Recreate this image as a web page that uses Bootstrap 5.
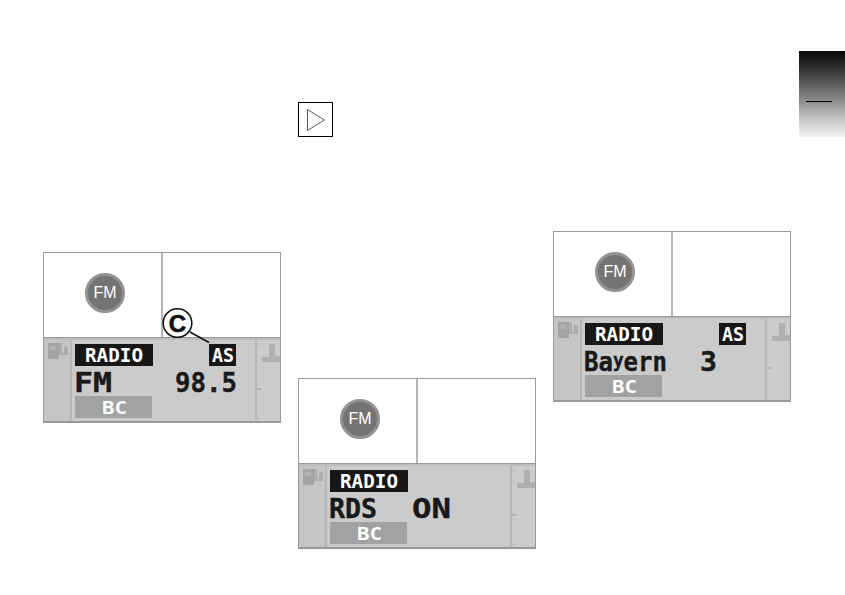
<!DOCTYPE html>
<html lang="en">
<head>
  <meta charset="UTF-8">
  <meta name="viewport" content="width=device-width, initial-scale=1.0">
  <title>Radio</title>
  <link href="https://cdn.jsdelivr.net/npm/bootstrap@5.3.3/dist/css/bootstrap.min.css" rel="stylesheet">
  <style>
    body {
      background-color: #fff;
      font-family: "Liberation Sans", Arial, sans-serif;
      overflow: hidden;
    }
    .manual-page {
      width: 845px;
      height: 595px;
      padding-left: 43px;
      gap: 17px;
    }
    .manual-col {
      width: 238px;
    }
    .col-one { padding-top: 252px; }
    .col-two { padding-top: 102px; }
    .col-three { padding-top: 231px; }
    .note-icon {
      width: 35px;
      height: 35px;
      margin-bottom: 241px;
    }
    .chapter-tab {
      width: 46px;
      height: 86px;
      margin-top: 51px;
      margin-left: -9px;
      padding: 50px 0 0 7px;
      background: linear-gradient(#080808 0%, #303030 20%, #858585 55%, #c8c8c8 80%, #f4f4f4 100%);
    }
    .tab-line {
      width: 26px;
      height: 1px;
      background-color: #000;
    }
    .figure-box {
      height: 171px;
      border: 1px solid #999;
      border-bottom-width: 2px;
    }
    .keys {
      height: 85px;
      border-bottom: 1px solid #999;
    }
    .key-left {
      width: 119px;
      padding: 20px 0 0 41px;
      border-right: 2px solid #b5b5b5;
    }
    .fm-key {
      width: 40px;
      height: 40px;
      border: 3px solid #929292;
      background-color: #737373;
      color: #fff;
      font-size: 16px;
      line-height: 1;
    }
    .lcd {
      height: 83px;
      background-color: #cbcbcb;
      border-top: 2px solid #bdbdbd;
    }
    .lcd-side-left {
      width: 28px;
      background-color: #c5c5c5;
      border-right: 2px solid #b6b6b6;
    }
    .lcd-side-right {
      width: 25px;
      border-left: 2px solid #b6b6b6;
    }
    .lcd-main {
      width: 183px;
      padding: 4px 19px 0 3px;
    }
    .lcd-tag {
      height: 22px;
      background-color: #171717;
    }
    .tag-radio { width: 78px; }
    .tag-as { width: 27px; }
    .tag-bc {
      width: 77px;
      background-color: #a2a2a2;
    }
    .lcd-line {
      width: 161px;
      height: 30px;
      stroke: #191919;
      stroke-width: .4px;
    }
    .pixel-text {
      font-family: "DejaVu Sans Mono", monospace;
      font-weight: bold;
    }
    .callout {
      left: 118px;
      top: 54px;
    }
    svg {
      display: block;
      overflow: visible;
    }
  </style>
</head>
<body>

  <svg width="0" height="0" class="position-absolute">
    <defs>
      <symbol id="fuel" viewBox="0 0 26 81">
        <path d="M4 3h11v16H4z" fill="#a4a4a4"/>
        <path d="M6 6h6v4H6z" fill="#b2b2b2"/>
        <path d="M15 3h3v10h2V5l4 2v8h-9z" fill="#adadad"/>
      </symbol>
      <symbol id="gauge" viewBox="0 0 23 81">
        <path d="M12 4h6v12h5v6H5v-5h7z" fill="#b0b0b0"/>
        <path d="M0 48h4v2H0z" fill="#b0b0b0"/>
        <path d="M0 4h3v1H0zM0 78h3v1H0z" fill="#b9b9b9"/>
      </symbol>
    </defs>
  </svg>

  <main class="manual-page d-flex align-items-start">

    <!-- FM frequency -->
    <section class="manual-col col-one">
      <div class="figure-box position-relative">
        <div class="keys d-flex">
          <div class="key-left"><div class="fm-key rounded-circle d-flex align-items-center justify-content-center">FM</div></div>
        </div>
        <div class="lcd d-flex">
          <div class="lcd-side-left"><svg width="26" height="81"><use href="#fuel"/></svg></div>
          <div class="lcd-main">
            <div class="d-flex justify-content-between">
              <div class="lcd-tag tag-radio"><svg width="78" height="22"><text class="pixel-text" x="10" y="18" font-size="19" textLength="58" lengthAdjust="spacingAndGlyphs" fill="#fff">RADIO</text></svg></div>
              <div class="lcd-tag tag-as"><svg width="27" height="22"><text class="pixel-text" x="3" y="18" font-size="19" textLength="22" lengthAdjust="spacingAndGlyphs" fill="#fff">AS</text></svg></div>
            </div>
            <svg class="lcd-line pixel-text" font-size="27" fill="#191919">
              <text x="-1" y="26" textLength="38" lengthAdjust="spacingAndGlyphs">FM</text>
              <text x="100" y="26" textLength="62" lengthAdjust="spacingAndGlyphs">98.5</text>
            </svg>
            <div class="lcd-tag tag-bc"><svg width="77" height="22"><text class="pixel-text" x="27" y="18" font-size="18" textLength="25" lengthAdjust="spacingAndGlyphs" fill="#fff">BC</text></svg></div>
          </div>
          <div class="lcd-side-right"><svg width="23" height="81"><use href="#gauge"/></svg></div>
        </div>
        <svg class="callout position-absolute" width="52" height="40">
          <path d="M28 25L47 35.5" stroke="#111" stroke-width="1.5"/>
          <circle cx="15.5" cy="16" r="14.3" fill="#fff" stroke="#111" stroke-width="1.5"/>
          <text x="15.5" y="24.5" font-size="24" font-weight="bold" text-anchor="middle" fill="#111" stroke="#111" stroke-width=".6">C</text>
        </svg>
      </div>
    </section>

    <!-- RDS on -->
    <section class="manual-col col-two">
      <svg class="note-icon" viewBox="0 0 35 35">
        <rect x=".5" y=".5" width="34" height="34" fill="#fff" stroke="#000"/>
        <path d="M9.5 7.5v21L26.5 18z" fill="none" stroke="#444" stroke-width=".9"/>
      </svg>
      <div class="figure-box">
        <div class="keys d-flex">
          <div class="key-left"><div class="fm-key rounded-circle d-flex align-items-center justify-content-center">FM</div></div>
        </div>
        <div class="lcd d-flex">
          <div class="lcd-side-left"><svg width="26" height="81"><use href="#fuel"/></svg></div>
          <div class="lcd-main">
            <div class="lcd-tag tag-radio"><svg width="78" height="22"><text class="pixel-text" x="10" y="18" font-size="19" textLength="58" lengthAdjust="spacingAndGlyphs" fill="#fff">RADIO</text></svg></div>
            <svg class="lcd-line pixel-text" font-size="27" fill="#191919">
              <text x="-1" y="26" textLength="48" lengthAdjust="spacingAndGlyphs">RDS</text>
              <text x="82" y="26" textLength="39" lengthAdjust="spacingAndGlyphs">ON</text>
            </svg>
            <div class="lcd-tag tag-bc"><svg width="77" height="22"><text class="pixel-text" x="27" y="18" font-size="18" textLength="25" lengthAdjust="spacingAndGlyphs" fill="#fff">BC</text></svg></div>
          </div>
          <div class="lcd-side-right"><svg width="23" height="81"><use href="#gauge"/></svg></div>
        </div>
      </div>
    </section>

    <!-- Station name, its y is raised to stand on the baseline -->
    <section class="manual-col col-three">
      <div class="figure-box">
        <div class="keys d-flex">
          <div class="key-left"><div class="fm-key rounded-circle d-flex align-items-center justify-content-center">FM</div></div>
        </div>
        <div class="lcd d-flex">
          <div class="lcd-side-left"><svg width="26" height="81"><use href="#fuel"/></svg></div>
          <div class="lcd-main">
            <div class="d-flex justify-content-between">
              <div class="lcd-tag tag-radio"><svg width="78" height="22"><text class="pixel-text" x="10" y="18" font-size="19" textLength="58" lengthAdjust="spacingAndGlyphs" fill="#fff">RADIO</text></svg></div>
              <div class="lcd-tag tag-as"><svg width="27" height="22"><text class="pixel-text" x="3" y="18" font-size="19" textLength="22" lengthAdjust="spacingAndGlyphs" fill="#fff">AS</text></svg></div>
            </div>
            <svg class="lcd-line pixel-text" font-size="27" fill="#191919">
              <text x="-1" y="26" textLength="83" lengthAdjust="spacingAndGlyphs">Ba<tspan dy="-4" font-size="20">y</tspan><tspan dy="4">ern</tspan></text>
              <text x="115" y="26" textLength="17" lengthAdjust="spacingAndGlyphs">3</text>
            </svg>
            <div class="lcd-tag tag-bc"><svg width="77" height="22"><text class="pixel-text" x="27" y="18" font-size="18" textLength="25" lengthAdjust="spacingAndGlyphs" fill="#fff">BC</text></svg></div>
          </div>
          <div class="lcd-side-right"><svg width="23" height="81"><use href="#gauge"/></svg></div>
        </div>
      </div>
    </section>

    <div class="chapter-tab flex-shrink-0"><div class="tab-line"></div></div>
  </main>

  <script src="https://cdn.jsdelivr.net/npm/bootstrap@5.3.3/dist/js/bootstrap.bundle.min.js"></script>
</body>
</html>
